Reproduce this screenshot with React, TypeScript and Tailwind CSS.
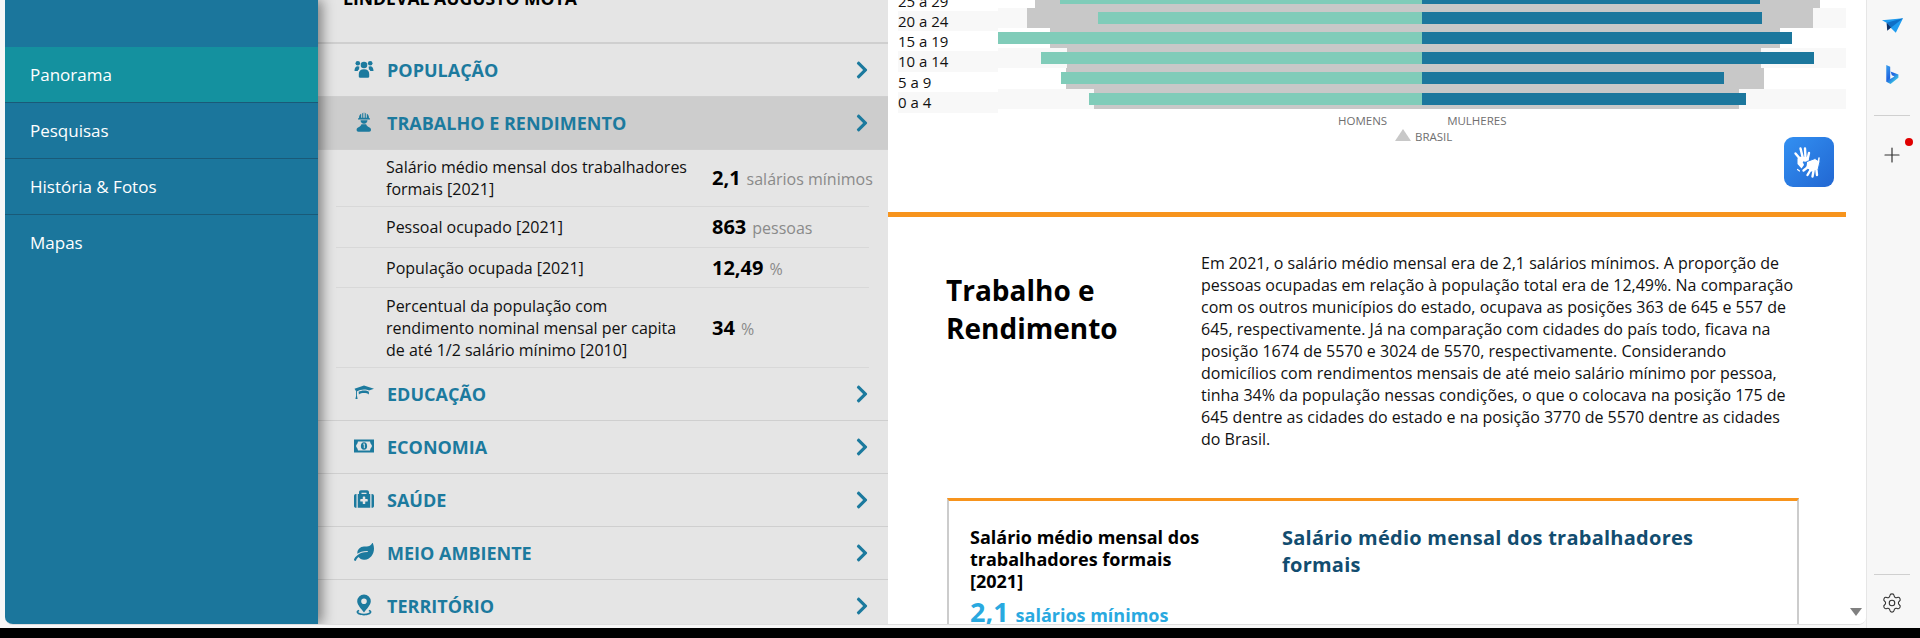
import { Plus, Settings } from "lucide-react"
import { FaChevronRight, FaMedkit, FaLeaf } from "react-icons/fa"

const font = "font-['Open_Sans',sans-serif]"

const navItems = ["Panorama", "Pesquisas", "História & Fotos", "Mapas"]

// y positions below are page coordinates, the svg viewBox starts at the page origin
const pyramid = [
  { y: -12, h: 20, grayL: 1035, grayR: 1820, left: 1060, right: 1760 },
  { y: 8, h: 20, grayL: 1027, grayR: 1813, left: 1098, right: 1762 },
  { y: 28, h: 20, grayL: 1050, grayR: 1780, left: 998, right: 1792 },
  { y: 48, h: 20, grayL: 1067, grayR: 1761, left: 1041, right: 1814 },
  { y: 68, h: 21, grayL: 1066, grayR: 1764, left: 1061, right: 1724 },
  { y: 89, h: 20, grayL: 1094, grayR: 1739, left: 1089, right: 1746 },
]

const ageLabels = [
  { text: "25 a 29", h: "h-[20px]", bg: "" },
  { text: "20 a 24", h: "h-[20px]", bg: "bg-[#f8f8f8]" },
  { text: "15 a 19", h: "h-[20px]", bg: "" },
  { text: "10 a 14", h: "h-[21px]", bg: "bg-[#f8f8f8]" },
  { text: "5 a 9", h: "h-[20px]", bg: "" },
  { text: "0 a 4", h: "h-[21px]", bg: "bg-[#f8f8f8]" },
]

function UsersIcon() {
  return (
    <svg viewBox="0 0 20 20" className="h-[20px] w-[20px]" fill="currentColor">
      <circle cx="3.800" cy="4.200" r="2.300" />
      <circle cx="16.200" cy="4.200" r="2.300" />
      <circle cx="10" cy="6" r="3.300" />
      <path d="M.5 12c0-3 1.200-4.800 3.300-4.800.8 0 1.300.2 1.700.5-.4.800-.5 1.700-.3 2.600-.8.500-1.300 1-1.500 1.700H.5z" />
      <path d="M19.500 12c0-3-1.200-4.800-3.300-4.800-.8 0-1.300.2-1.700.5.400.800.5 1.700.3 2.600.8.500 1.300 1 1.500 1.700h3.200z" />
      <path d="M4.800 15c0-3 1.800-4.800 5.200-4.800s5.200 1.800 5.200 4.800v2.500c0 .8-.5 1.200-1.200 1.200H6c-.7 0-1.200-.4-1.200-1.200V15z" />
    </svg>
  )
}

function WorkerIcon() {
  return (
    <svg viewBox="0 0 20 20" className="h-[20px] w-[20px]" fill="currentColor">
      <path d="M5 6.200C5 3.800 6 2.400 7.200 1.800v4h1V1.400L9.300.6V5.800h1.400V.6l1.100.8v4.400h1V1.800C14 2.400 15 3.800 15 6.200h1v1.300H4V6.200h1z" />
      <path d="M6.500 8.300h7c-.2 2.200-1.500 3.400-3.500 3.400s-3.300-1.200-3.500-3.400z" />
      <path d="M7.800 12.300h4.400c.3 1.300 1.200 2.100 2.400 2.600 1.300.5 2.400 1.400 2.400 2.800 0 1.200-.6 2-1.800 2H4.400c-1.200 0-1.800-.8-1.800-2 0-1.400 1.100-2.300 2.400-2.800 1.200-.5 2.100-1.300 2.400-2.600z" />
    </svg>
  )
}

function CapIcon() {
  return (
    <svg viewBox="0 0 20 20" className="h-[20px] w-[20px]" fill="currentColor">
      <path d="M10 2.500 20 5.700l-5 1.700C13.800 6.800 12 6.400 10 6.400c-2.600 0-5 .8-6.500 1.800L2.400 7.800v.9L.5 5.700 10 2.500z" />
      <path d="M4.500 9c1.500-1 3.400-1.500 5.500-1.500s3.800.5 4.900 1.200v2.700c-1.200-.8-3-1.300-5-1.300-1.900 0-3.500.4-5 1.400l-.4-3.500z" />
      <path d="M2.100 7.500h.9v5.300l.6 3.100H1.400l.7-3.100V7.500z" />
    </svg>
  )
}

function MoneyIcon() {
  return (
    <svg viewBox="0 0 20 14" className="h-[14px] w-[20px]">
      <rect x="0" y="0.500" width="20" height="13" fill="currentColor" />
      <path d="M4 2.500h12c.4 1.800 1 3 1.800 3.600v1.800c-.8.600-1.400 1.800-1.800 3.600H4c-.4-1.800-1-3-1.800-3.600V6.100C3 5.500 3.600 4.300 4 2.500z" fill="#e5e5e5" />
      <ellipse cx="10" cy="7" rx="3.100" ry="3.800" fill="currentColor" />
      <path d="M9.200 5.200 10.300 4.800v4.400" fill="none" stroke="#e5e5e5" strokeWidth="1" />
    </svg>
  )
}

function PinIcon() {
  return (
    <svg viewBox="0 0 20 22" className="h-[22px] w-[20px]" fill="currentColor">
      <path
        fillRule="evenodd"
        d="M10 .5a6.800 6.800 0 0 1 6.800 6.800c0 3.400-3.800 7.500-6.800 11.200-3-3.700-6.800-7.800-6.800-11.200A6.800 6.800 0 0 1 10 .5zm0 4a2.800 2.800 0 1 0 0 5.600 2.800 2.800 0 0 0 0-5.600z"
      />
      <path d="M4.600 15.800C3.200 16.400 2.600 17.100 2.600 18c0 1.900 3.300 3.400 7.400 3.400s7.400-1.500 7.400-3.400c0-.9-.6-1.600-2-2.200l-.9 1.200c.7.300 1.200.7 1.200 1 0 .6-2.200 1.800-5.700 1.800s-5.700-1.200-5.700-1.800c0-.3.500-.7 1.200-1l-.9-1.200z" />
    </svg>
  )
}

function HandsIcon() {
  return (
    <svg viewBox="0 0 50 50" className="h-[50px] w-[50px]" fill="none" stroke="#fff" strokeLinecap="round">
      <g strokeWidth="2.400">
        <path d="M17 23 11.500 16.500M19 21.500 16.500 11.500M21.500 21 21 11.500M23.500 22.500 25 16" />
      </g>
      <path d="M13.500 21.500 17 19.500 24 20.500 25.500 25 19 24.500 20 28 17.500 31.500 13.500 27z" fill="#fff" stroke="none" />
      <path d="M19.500 25.500 24 27.500" stroke="#2f84ea" strokeWidth="1.500" />
      <path d="M23 24.500 31 21.500 36 24.500 34 33 27.500 35 22 30.500z" fill="#fff" stroke="#2d80e6" strokeWidth="1" />
      <g strokeWidth="2.400">
        <path d="M24 30 19.500 33.500M26.500 33 23.500 38M29.500 34 28.500 39.500M32.500 33.500 33 38" />
      </g>
      <path d="M34.500 25 35 21" stroke="#fff" strokeWidth="1.500" />
      <path d="M13.500 32.500 15.500 34" stroke="#fff" strokeWidth="1.200" />
    </svg>
  )
}

function TopicRow({ icon, label, active }: { icon: React.ReactNode; label: string; active?: boolean }) {
  return (
    <div
      className={`flex h-[53px] shrink-0 items-center border-b border-[#cfcfcf] pl-[36px] pr-[16px] text-[#1c7a9e] ${
        active ? "bg-[#cdcdcd]" : ""
      }`}
    >
      <span className="-mt-[3px] flex w-[33px] justify-start">{icon}</span>
      <span className="text-[18px] font-bold leading-none">{label}</span>
      <FaChevronRight className="ml-auto" size={20} />
    </div>
  )
}

function Indicator({ lines, value, unit, h }: { lines: string[]; value: string; unit: string; h: string }) {
  return (
    <div className={`ml-[18px] mr-[19px] flex shrink-0 items-center border-b border-[#d8d8d8] pl-[50px] ${h}`}>
      <div className="w-[326px] shrink-0 text-[16px] leading-[22px] text-[#111]">
        {lines.map((l) => (
          <div key={l} className="whitespace-nowrap">
            {l}
          </div>
        ))}
      </div>
      <div className="shrink-0 whitespace-nowrap">
        <span className="text-[20px] font-bold text-black">{value}</span>
        <span className="ml-[6px] text-[16px] text-[#8a8a8a]">{unit}</span>
      </div>
    </div>
  )
}

export default function App() {
  return (
    <div className={`flex h-[638px] w-[1920px] flex-col overflow-hidden bg-black ${font}`}>
      <div className="flex h-[628px] bg-[#f7f7f7] pl-[5px]">
        {/* app window */}
        <div className="flex h-[625px] w-[1861px] overflow-hidden rounded-b-[8px] border-b border-[#dedede] bg-white">
          <aside className="relative z-10 w-[313px] shrink-0 bg-[#1b769c] pt-[47px] shadow-[4px_0_12px_rgba(0,0,0,0.45)]">
            {navItems.map((item, i) => (
              <div
                key={item}
                className={`flex h-[56px] items-center border-b border-[#1a5a78] pl-[25px] text-[17px] text-white ${
                  i === 0 ? "bg-[#14919f]" : ""
                } ${i === 3 ? "border-b-0" : ""}`}
              >
                {item}
              </div>
            ))}
          </aside>

          <section className="flex w-[570px] shrink-0 flex-col overflow-hidden bg-[#e5e5e5]">
            <div className="flex h-[44px] shrink-0 items-end border-b-2 border-[#cfcfcf] pb-[34px] pl-[25px]">
              <span className="text-[17.6px] font-bold leading-none text-black">LINDEVAL AUGUSTO MOTA</span>
            </div>
            <TopicRow icon={<UsersIcon />} label="POPULAÇÃO" />
            <TopicRow icon={<WorkerIcon />} label="TRABALHO E RENDIMENTO" active />
            <Indicator
              h="h-[57px]"
              lines={["Salário médio mensal dos trabalhadores", "formais [2021]"]}
              value="2,1"
              unit="salários mínimos"
            />
            <Indicator h="h-[41px]" lines={["Pessoal ocupado [2021]"]} value="863" unit="pessoas" />
            <Indicator h="h-[40px]" lines={["População ocupada [2021]"]} value="12,49" unit="%" />
            <Indicator
              h="h-[80px]"
              lines={["Percentual da população com", "rendimento nominal mensal per capita", "de até 1/2 salário mínimo [2010]"]}
              value="34"
              unit="%"
            />
            <TopicRow icon={<CapIcon />} label="EDUCAÇÃO" />
            <TopicRow icon={<MoneyIcon />} label="ECONOMIA" />
            <TopicRow icon={<FaMedkit size={20} />} label="SAÚDE" />
            <TopicRow icon={<FaLeaf size={20} />} label="MEIO AMBIENTE" />
            <TopicRow icon={<PinIcon />} label="TERRITÓRIO" />
          </section>

          <main className="w-[958px] shrink-0 overflow-hidden bg-white">
            {/* age pyramid, its top rows are scrolled out of view */}
            <div className="-mt-[12px] flex h-[125px] items-start pl-[10px]">
              <div className="w-[100px] shrink-0 pt-[3px]">
                {ageLabels.map((row) => (
                  <div key={row.text} className={`flex items-center text-[15px] text-[#111] ${row.h} ${row.bg}`}>
                    {row.text}
                  </div>
                ))}
              </div>
              <svg width="848" height="121" viewBox="998 -12 848 121" className="shrink-0">
                {pyramid.map((r, i) => (
                  <g key={r.y}>
                    {i % 2 === 1 && <rect x="998" y={r.y} width="848" height={r.h} fill="#f8f8f8" />}
                    <rect x={r.grayL} y={r.y} width={r.grayR - r.grayL} height={r.h} fill="#c8c8c8" />
                    <rect x={r.left} y={r.y + 4} width={1422 - r.left} height="12" fill="#80ccb9" />
                    <rect x="1422" y={r.y + 4} width={r.right - 1422} height="12" fill="#1c779d" />
                  </g>
                ))}
              </svg>
            </div>

            <div className="flex h-[99px] justify-between">
              <div className="pl-[450px] text-[11.5px] leading-[16px] text-[#6f6f6f]">
                <div className="flex gap-[60px]">
                  <span>HOMENS</span>
                  <span>MULHERES</span>
                </div>
                <div className="ml-[57px] flex items-center gap-[4px]">
                  <span className="mb-[4px] h-0 w-0 border-x-[8px] border-b-[12px] border-x-transparent border-b-[#c8c8c8]" />
                  <span>BRASIL</span>
                </div>
              </div>
              <div className="mr-[12px] mt-[24px] h-[50px] w-[50px] overflow-hidden rounded-[9px] bg-gradient-to-br from-[#3390f2] to-[#2267d2]">
                <HandsIcon />
              </div>
            </div>

            <div className="h-[5px] bg-[#f7941d]" />

            <div className="flex h-[281px] pl-[59px]">
              <h2 className="-ml-px w-[255px] shrink-0 pt-[54px] text-[28px] font-bold leading-[38px] text-black">
                Trabalho e
                <br />
                Rendimento
              </h2>
              <p className="whitespace-nowrap pt-[35px] text-[16px] leading-[22px] text-[#111]">
                Em 2021, o salário médio mensal era de 2,1 salários mínimos. A proporção de
                <br />
                pessoas ocupadas em relação à população total era de 12,49%. Na comparação
                <br />
                com os outros municípios do estado, ocupava as posições 363 de 645 e 557 de
                <br />
                645, respectivamente. Já na comparação com cidades do país todo, ficava na
                <br />
                posição 1674 de 5570 e 3024 de 5570, respectivamente. Considerando
                <br />
                domicílios com rendimentos mensais de até meio salário mínimo por pessoa,
                <br />
                tinha 34% da população nessas condições, o que o colocava na posição 175 de
                <br />
                645 dentre as cidades do estado e na posição 3770 de 5570 dentre as cidades
                <br />
                do Brasil.
              </p>
            </div>

            <div className="ml-[59px] flex h-[200px] w-[852px] border-x-2 border-t-[3px] border-x-[#cccccc] border-t-[#f7941d]">
              <div className="w-[333px] shrink-0 pl-[21px] pt-[25px]">
                <div className="text-[18px] font-bold leading-[22px] text-black">
                  Salário médio mensal dos
                  <br />
                  trabalhadores formais
                  <br />
                  [2021]
                </div>
                <div className="font-bold leading-[40px] text-[#29a9e0]">
                  <span className="text-[27px]">2,1</span>
                  <span className="ml-[7px] text-[18px]">salários mínimos</span>
                </div>
              </div>
              <div className="pt-[23px] text-[20px] font-bold leading-[27px] tracking-[0.25px] text-[#124d70]">
                Salário médio mensal dos trabalhadores
                <br />
                formais
              </div>
            </div>
          </main>

          <div className="flex w-[20px] shrink-0 items-end justify-center bg-white pb-[8px]">
            <span className="h-0 w-0 border-x-[6px] border-t-[8px] border-x-transparent border-t-[#808080]" />
          </div>
        </div>

        {/* browser side rail */}
        <aside className="flex h-[628px] w-[54px] shrink-0 flex-col items-center border-l border-[#e6e6e6] bg-[#f7f7f7] pr-[3px]">
          <svg viewBox="30 32 76 56" className="mt-[16px] h-[19px] w-[25px] shrink-0">
            <path d="M36 44 100 38 78 82 64 68 50 52z" fill="#1f9cf0" />
            <path d="M50 52 100 38 64 66z" fill="#0f6fc6" />
            <path d="M50 52 64 66 52 76z" fill="#0b2f66" />
          </svg>
          <svg viewBox="44 176 44 64" className="mt-[29px] h-[21px] w-[15px] shrink-0">
            <defs>
              <linearGradient id="bing" x1="0" y1="0" x2="0.6" y2="1">
                <stop offset="0" stopColor="#3aa0ee" />
                <stop offset="0.6" stopColor="#1f63e0" />
                <stop offset="1" stopColor="#3fd3e6" />
              </linearGradient>
            </defs>
            <path d="M47 179 59 184V222L72 214 64 210 60 199 84 208V218L60 237 47 230z" fill="url(#bing)" />
          </svg>
          <div className="mt-[30px] h-px w-[36px] shrink-0 bg-[#d0d0d0]" />
          <div className="relative mt-[27px]">
            <Plus className="h-[24px] w-[24px] text-[#333]" strokeWidth={1.2} />
            <span className="absolute -right-[9px] -top-[5px] h-[8px] w-[8px] rounded-full bg-[#e00000]" />
          </div>
          <div className="mt-auto mb-[14px] flex flex-col items-center gap-[17px]">
            <div className="h-px w-[36px] bg-[#d0d0d0]" />
            <Settings className="h-[22px] w-[22px] text-[#333]" strokeWidth={1.2} />
          </div>
        </aside>
      </div>
    </div>
  )
}
